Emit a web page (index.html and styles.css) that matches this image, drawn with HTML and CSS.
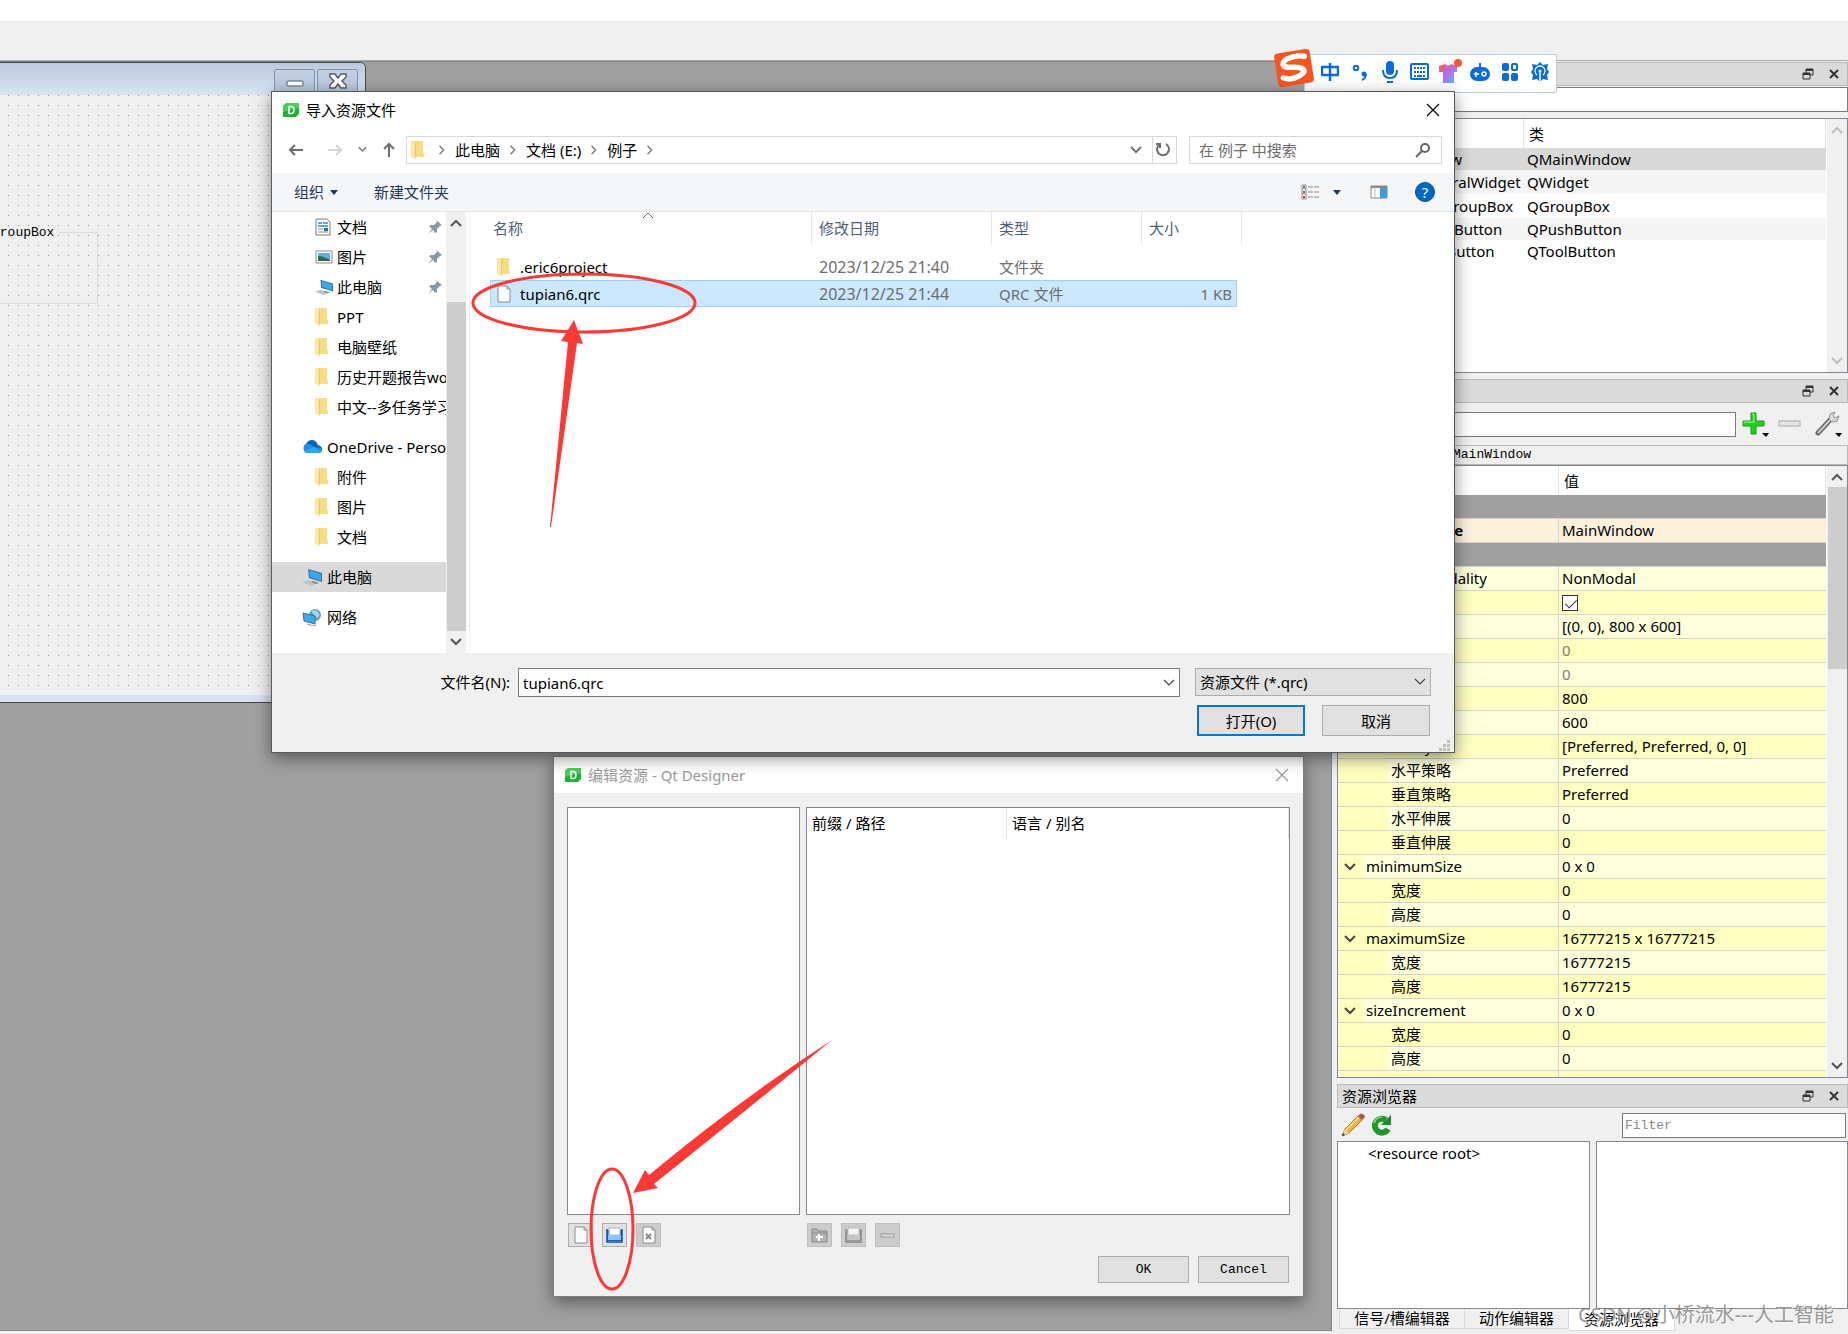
FILE: index.html
```html
<!DOCTYPE html>
<html lang="zh-CN">
<head>
<meta charset="utf-8">
<title>Qt Designer</title>
<link rel="stylesheet" href="styles.css">
</head>
<body>
<svg class="defs" aria-hidden="true">
  <symbol id="folder" viewBox="0 0 14 18" preserveAspectRatio="xMinYMid"><path fill="#f9dc86" d="M3 0h9v12l1 1v3H3z"/><path fill="#fbe7a6" d="M0 0h4v18l-3-2H0z"/><path fill="#e9c765" d="M4 1h1v15l-1 2z"/></symbol>
  <symbol id="pin" viewBox="0 0 14 14"><path fill="#8a98a5" d="M8 0l6 5-2 1-3 3v3l-2 1-2-3-5 4 4-5-3-3 2-1h3l3-3z"/></symbol>
  <symbol id="pc" viewBox="0 0 20 17"><path fill="#4b6a86" d="M6 0l14 4v9L7 9z"/><path fill="#35a7f5" d="M7 1l12 4v7L8 8z"/><path fill="#b8c2ca" d="M0 13l6-2 9 3-5 3z"/><path fill="#7f8b94" d="M11 12l6 2-3 1-5-2z"/></symbol>
  <symbol id="float" viewBox="0 0 12 12"><path fill="none" stroke="#333" d="M4 5V1h7v6H8M1 5h7v6H1z"/><path stroke="#333" stroke-width="2" d="M4 2h7M1 6h7"/></symbol>
  <symbol id="cross" viewBox="0 0 12 12"><path stroke="#333" stroke-width="2" d="M2 2l8 8M10 2l-8 8"/></symbol>
  <symbol id="thinx" viewBox="0 0 14 14"><path stroke="currentColor" stroke-width="1.2" d="M1 1l12 12M13 1L1 13"/></symbol>
  <symbol id="down" viewBox="0 0 12 8"><path fill="none" stroke="currentColor" stroke-width="2" d="M1 1l5 5 5-5"/></symbol>
  <symbol id="downthin" viewBox="0 0 12 8"><path fill="none" stroke="currentColor" stroke-width="1.2" d="M1 1l5 5 5-5"/></symbol>
  <symbol id="up" viewBox="0 0 12 8"><path fill="none" stroke="currentColor" stroke-width="2" d="M1 7l5-5 5 5"/></symbol>
  <symbol id="right" viewBox="0 0 8 12"><path fill="none" stroke="#777" stroke-width="1.6" d="M1 1l5 5-5 5"/></symbol>
  <symbol id="caret" viewBox="0 0 8 5"><path fill="currentColor" d="M0 0h8L4 5z"/></symbol>
  <symbol id="page" viewBox="0 0 14 18"><path fill="#fbfbfb" stroke="#8c8c8c" d="M1 1h9l3 3v13H1z"/><path fill="none" stroke="#8c8c8c" d="M10 1v3h3"/></symbol>
  <symbol id="qtd" viewBox="0 0 16 14"><path fill="#22b035" d="M3 0h13v11l-3 3H0V3z"/><path fill="#4ccf5a" d="M3 0h13v5L0 9V3z"/><path fill="none" stroke="#fff" stroke-width="1.5" d="M6 3.500h2q3 0 3 3.500t-3 3.500H6z"/></symbol>
</svg>

<div class="app">
  <header class="menu-strip"></header>
  <div class="tool-strip"></div>
  <div class="workspace">
    <main class="mdi">
      <section class="form-window">
        <div class="form-title">
          <button class="form-btn" aria-label="最小化"><svg width="18" height="16"><rect x="1" y="8" width="16" height="5" rx="1" fill="#fff" stroke="#555b66"/></svg></button>
          <button class="form-btn" aria-label="关闭"><svg width="18" height="16"><path d="M1 1h5l3 4 3-4h5v3l-4 4 4 4v3h-5l-3-4-3 4H1v-3l4-4-4-4z" fill="#fff" stroke="#555b66" stroke-width="1.400"/></svg></button>
        </div>
        <div class="form-canvas">
          <fieldset class="group"><legend>GroupBox</legend></fieldset>
        </div>
      </section>
    </main>

    <aside class="docks">
      <section class="dock">
        <div class="dock-title"><span></span><button class="icon-btn" aria-label="浮动"><svg width="12" height="12"><use href="#float"/></svg></button><button class="icon-btn" aria-label="关闭"><svg width="12" height="12"><use href="#cross"/></svg></button></div>
        <input class="line-edit object-filter" type="text" aria-label="过滤对象">
        <div class="view object-view">
          <table class="object-tree">
            <thead><tr><th></th><th>类</th></tr></thead>
            <tbody>
              <tr class="current"><td class="in-root">MainWindow</td><td>QMainWindow</td></tr>
              <tr class="alt tall"><td class="in-central">centralWidget</td><td>QWidget</td></tr>
              <tr class="tall"><td class="in-group">groupBox</td><td>QGroupBox</td></tr>
              <tr class="alt"><td class="in-leaf">pushButton</td><td>QPushButton</td></tr>
              <tr><td class="in-leaf">toolButton</td><td>QToolButton</td></tr>
            </tbody>
          </table>
          <div class="scroll idle"><svg width="12" height="8"><use href="#up"/></svg><svg width="12" height="8"><use href="#down"/></svg></div>
        </div>
      </section>

      <section class="dock props">
        <div class="dock-title"><span></span><button class="icon-btn" aria-label="浮动"><svg width="12" height="12"><use href="#float"/></svg></button><button class="icon-btn" aria-label="关闭"><svg width="12" height="12"><use href="#cross"/></svg></button></div>
        <div class="prop-tools">
          <input class="line-edit" type="text" aria-label="过滤属性">
          <button class="icon-btn" aria-label="添加"><svg width="28" height="28"><path d="M9 3h5v8h8v5h-8v8H9v-8H1v-5h8z" fill="#22d322" stroke="#119a11"/><path d="M10 4h2v8H2v1" fill="none" stroke="#a5f7a0"/><path d="M20 23h7l-3 4z"/></svg></button>
          <button class="icon-btn minus" aria-label="移除"><svg width="24" height="28"><rect x="1" y="11" width="21" height="5" fill="#e4e4e4" stroke="#a9a9a9"/></svg></button>
          <button class="icon-btn wrench" aria-label="配置"><svg width="28" height="28"><path d="M3 23L16 9" stroke="#666" stroke-width="5" stroke-linecap="round"/><path d="M3 23L17 8" stroke="#ccc" stroke-width="2"/><path d="M20 2l-5 2-1 5 3 3 5-1 2-5-4 2-2-2z" fill="#ddd" stroke="#8d8d8d"/><path d="M20 23h7l-3 4z"/></svg></button>
        </div>
        <div class="prop-object">MainWindow</div>
        <div class="view prop-view">
          <table class="prop-grid">
            <thead><tr><th></th><th>值</th></tr></thead>
            <tbody>
              <tr class="cat"><td colspan="2"></td></tr>
              <tr class="changed"><td class="l1">objectName</td><td>MainWindow</td></tr>
              <tr class="cat"><td colspan="2"></td></tr>
              <tr><td class="l1 wide">windowModality</td><td>NonModal</td></tr>
              <tr><td class="l1">enabled</td><td><input class="tick" type="checkbox" checked aria-label="enabled"></td></tr>
              <tr><td class="l1">geometry</td><td>[(0, 0), 800 x 600]</td></tr>
              <tr class="off"><td class="l2">X</td><td>0</td></tr>
              <tr class="off"><td class="l2">Y</td><td>0</td></tr>
              <tr><td class="l2">宽度</td><td>800</td></tr>
              <tr><td class="l2">高度</td><td>600</td></tr>
              <tr><td class="l1">sizePolicy</td><td>[Preferred, Preferred, 0, 0]</td></tr>
              <tr><td class="l2">水平策略</td><td>Preferred</td></tr>
              <tr><td class="l2">垂直策略</td><td>Preferred</td></tr>
              <tr><td class="l2">水平伸展</td><td>0</td></tr>
              <tr><td class="l2">垂直伸展</td><td>0</td></tr>
              <tr><td class="l1 open"><svg width="12" height="8"><use href="#down"/></svg>minimumSize</td><td>0 x 0</td></tr>
              <tr><td class="l2">宽度</td><td>0</td></tr>
              <tr><td class="l2">高度</td><td>0</td></tr>
              <tr><td class="l1 open"><svg width="12" height="8"><use href="#down"/></svg>maximumSize</td><td>16777215 x 16777215</td></tr>
              <tr><td class="l2">宽度</td><td>16777215</td></tr>
              <tr><td class="l2">高度</td><td>16777215</td></tr>
              <tr><td class="l1 open"><svg width="12" height="8"><use href="#down"/></svg>sizeIncrement</td><td>0 x 0</td></tr>
              <tr><td class="l2">宽度</td><td>0</td></tr>
              <tr><td class="l2">高度</td><td>0</td></tr>
              <tr><td class="l1">baseSize</td><td></td></tr>
            </tbody>
          </table>
          <div class="scroll"><svg width="12" height="8"><use href="#up"/></svg><div class="thumb prop-thumb"></div><svg width="12" height="8"><use href="#down"/></svg></div>
        </div>
      </section>

      <section class="dock">
        <div class="dock-title"><span>资源浏览器</span><button class="icon-btn" aria-label="浮动"><svg width="12" height="12"><use href="#float"/></svg></button><button class="icon-btn" aria-label="关闭"><svg width="12" height="12"><use href="#cross"/></svg></button></div>
        <div class="res-tools">
          <button class="icon-btn" aria-label="编辑资源"><svg width="24" height="24"><path d="M1 23l3-7L17 3l4 4L8 20z" fill="#f2b33d" stroke="#a87422"/><path d="M5 17L18 4" stroke="#ffe09a" stroke-width="1.500"/><path d="M17 3l2-2q2-1 4 1t0 3l-2 2z" fill="#b9543a"/><path d="M1 23l3-7 4 4z" fill="#ecd3a8"/><path d="M1 23l1-3 2 2z" fill="#333"/></svg></button>
          <button class="icon-btn" aria-label="重新加载"><svg width="24" height="24"><path d="M18 16a7 7 0 1 1-2-9" fill="none" stroke="#1e9a2b" stroke-width="6"/><path d="M21 2v10H11z" fill="#1b8f28"/><path d="M4 10q2-6 8-6" fill="none" stroke="#8fdc93" stroke-width="1.500"/></svg></button>
          <input class="line-edit mono" type="text" placeholder="Filter" aria-label="Filter">
        </div>
        <div class="res-lists">
          <ul class="view res-root"><li>&lt;resource root&gt;</li></ul>
          <div class="view"></div>
        </div>
      </section>
      <nav class="tabs">
        <button class="tab">信号/槽编辑器</button><button class="tab">动作编辑器</button><button class="tab active">资源浏览器</button>
      </nav>
    </aside>
  </div>
</div>

<section class="ime" aria-label="输入法">
  <svg class="ime-logo" width="42" height="42" viewBox="0 0 42 42"><g transform="rotate(-9 21 21)"><rect x="3" y="4" width="36" height="34" rx="4" fill="#f8541f"/><path d="M33 11q-5-2-13-1t-9 5 8 5 11 4-6 6-15-1" fill="none" stroke="#fff" stroke-width="5.500" stroke-linecap="round"/></g></svg>
  <svg width="18" height="20"><path d="M1 5h16v8H1zM9 1v18" fill="none" stroke="#0b6bd8" stroke-width="2.500"/></svg>
  <svg width="18" height="20"><circle cx="5" cy="6" r="2.200" fill="none" stroke="#0b6bd8" stroke-width="2"/><circle cx="13" cy="12" r="2.500" fill="#0b6bd8"/><path d="M15 12q0 4-4 6" fill="none" stroke="#0b6bd8" stroke-width="2"/></svg>
  <svg width="18" height="22"><rect x="5" y="0" width="8" height="14" rx="4" fill="#0b6bd8"/><path d="M2 9q0 8 7 8t7-8M6 21h6" fill="none" stroke="#0b6bd8" stroke-width="2"/></svg>
  <svg width="20" height="18"><rect x="1" y="1" width="17" height="15" rx="1" fill="none" stroke="#0b6bd8" stroke-width="2"/><path d="M5 4v2M8 4v2M11 4v2M14 4v2M5 8v2M8 8v2M11 8v2M14 8v2M5 12v2M14 12v2" stroke="#0b6bd8" stroke-width="2"/><path d="M7 13h5" stroke="#0b6bd8" stroke-width="2"/></svg>
  <svg width="24" height="26"><defs><linearGradient id="shirt" x2="1" y2="1"><stop offset="0" stop-color="#ff5a3c"/><stop offset=".5" stop-color="#b56bf0"/><stop offset="1" stop-color="#49c8ff"/></linearGradient></defs><path d="M1 7l6-2q3 3 6 0l6 2v6h-3v11H5V13H1z" fill="url(#shirt)"/><circle cx="20" cy="4" r="4" fill="#ff5530"/></svg>
  <svg width="20" height="20"><rect x="0" y="5" width="20" height="14" rx="7" fill="#0b6bd8"/><path d="M10 1v5" stroke="#0b6bd8" stroke-width="2"/><path d="M4 12h5M6 10v5" stroke="#fff" stroke-width="1.500"/><circle cx="14" cy="12" r="2" fill="none" stroke="#fff" stroke-width="1.400"/></svg>
  <svg width="18" height="18"><rect x="1" y="0" width="7" height="8" rx="2" fill="#0b6bd8"/><rect x="11" y="1" width="5" height="6" rx="1" fill="none" stroke="#0b6bd8" stroke-width="2"/><rect x="1" y="10" width="7" height="8" rx="2" fill="#0b6bd8"/><rect x="10" y="10" width="7" height="8" rx="2" fill="#0b6bd8"/></svg>
  <svg width="18" height="20"><path d="M9 0l3 3 5-1-1 5 2 3-2 3 1 5-5-1-3 3-3-3-5 1 1-5-2-3 2-3-1-5 5 1z" fill="#0b6bd8"/><path d="M6 13a5 5 0 1 1 6 0" fill="none" stroke="#fff" stroke-width="1.300"/><circle cx="9" cy="9" r="1.500" fill="#fff"/><path d="M9 9v11" stroke="#fff" stroke-width="1.500"/></svg>
</section>

<section class="dialog edit-dialog" aria-label="编辑资源">
  <div class="dlg-title inactive"><svg width="16" height="14"><use href="#qtd"/></svg><h2>编辑资源 - Qt Designer</h2><button class="icon-btn" aria-label="关闭"><svg width="14" height="14"><use href="#thinx"/></svg></button></div>
  <div class="edit-body">
    <div class="edit-panes">
      <div class="view"></div>
      <div class="view"><div class="edit-head"><span>前缀 / 路径</span><span>语言 / 别名</span></div></div>
      <div class="tool-row">
        <button class="tool" aria-label="新建资源文件"><svg width="14" height="18"><use href="#page"/></svg></button>
        <button class="tool" aria-label="打开资源文件"><svg width="17" height="17"><path d="M1 3h15v11H1z" fill="#1e62c4"/><path d="M3 1h11v7H3z" fill="#fff" stroke="#9db7d8"/><path d="M2 8h13v5H2z" fill="#8cc4fa"/><path d="M1 2v13h15V2" fill="none" stroke="#1550a8" stroke-width="1.500"/></svg></button>
        <button class="tool" disabled aria-label="移除"><svg width="14" height="18"><use href="#page"/><path d="M4 8l5 5M9 8l-5 5" stroke="#888" stroke-width="2"/></svg></button>
      </div>
      <div class="tool-row">
        <button class="tool" disabled aria-label="添加前缀"><svg width="17" height="17"><path d="M1 5V2h5l1 2h9v11H1z" fill="#b4b4b4" stroke="#888"/><path d="M1 6h15" stroke="#888"/><path d="M8 7v7M5 10h7" stroke="#fff" stroke-width="2"/></svg></button>
        <button class="tool" disabled aria-label="添加文件"><svg width="17" height="17"><path d="M1 3h15v11H1z" fill="#999"/><path d="M3 1h11v7H3z" fill="#f6f6f6" stroke="#bbb"/><path d="M2 8h13v5H2z" fill="#c6c6c6"/><path d="M1 2v13h15V2" fill="none" stroke="#888" stroke-width="1.500"/></svg></button>
        <button class="tool" disabled aria-label="移除"><svg width="17" height="17"><rect x="2" y="7" width="13" height="3" fill="#ddd" stroke="#999"/></svg></button>
      </div>
    </div>
    <div class="edit-actions"><button class="push mono">OK</button><button class="push mono">Cancel</button></div>
  </div>
</section>

<section class="dialog file-dialog" aria-label="导入资源文件">
  <div class="dlg-title"><svg width="16" height="14"><use href="#qtd"/></svg><h2>导入资源文件</h2><button class="icon-btn" aria-label="关闭"><svg width="14" height="14"><use href="#thinx"/></svg></button></div>
  <div class="nav-row">
    <div class="nav-btns">
      <button class="icon-btn" aria-label="后退"><svg width="16" height="14"><path d="M15 7H2M7 2L2 7l5 5" fill="none" stroke="#6e6e6e" stroke-width="2"/></svg></button>
      <button class="icon-btn" aria-label="前进"><svg width="16" height="14"><path d="M1 7h13M9 2l5 5-5 5" fill="none" stroke="#d4d4d4" stroke-width="2"/></svg></button>
      <button class="icon-btn grey" aria-label="最近位置"><svg width="9" height="7"><use href="#down"/></svg></button>
      <button class="icon-btn" aria-label="上移"><svg width="14" height="16"><path d="M7 15V2M2 7l5-5 5 5" fill="none" stroke="#6e6e6e" stroke-width="2"/></svg></button>
    </div>
    <div class="address">
      <svg width="14" height="18"><use href="#folder"/></svg><svg width="8" height="10"><use href="#right"/></svg><a href="#">此电脑</a><svg width="8" height="10"><use href="#right"/></svg><a href="#">文档 (E:)</a><svg width="8" height="10"><use href="#right"/></svg><a href="#">例子</a><svg width="8" height="10"><use href="#right"/></svg>
      <button class="icon-btn grey addr-drop" aria-label="以前的位置"><svg width="12" height="8"><use href="#down"/></svg></button>
      <button class="icon-btn refresh" aria-label="刷新"><svg width="16" height="16"><path d="M11 2a6 6 0 1 1-6 0M5 6V2H1" fill="none" stroke="#6e6e6e" stroke-width="2"/></svg></button>
    </div>
    <div class="search"><input type="search" placeholder="在 例子 中搜索" aria-label="搜索"><svg width="16" height="16"><circle cx="10" cy="6" r="4" fill="none" stroke="#666" stroke-width="2"/><path d="M7 9l-6 6" stroke="#666" stroke-width="2"/></svg></div>
  </div>
  <div class="cmd-row">
    <button class="cmd">组织<svg width="8" height="5"><use href="#caret"/></svg></button><button class="cmd">新建文件夹</button>
    <button class="icon-btn view-mode" aria-label="更改视图"><svg width="19" height="16"><path d="M1 1h4v14H1zM1 5h4M1 10h4" fill="#fff" stroke="#8a8a8a"/><path d="M7 3h5M13 3h5M7 8h5M13 8h5M7 13h5M13 13h5" stroke="#888"/><path d="M2 3h2" stroke="#3f7fbf" stroke-width="2"/><path d="M2 8h2" stroke="#8a6a20" stroke-width="2"/><path d="M2 13h2" stroke="#c33" stroke-width="2"/></svg></button>
    <button class="icon-btn navy" aria-label="更多选项"><svg width="8" height="5"><use href="#caret"/></svg></button>
    <button class="icon-btn preview" aria-label="预览窗格"><svg width="18" height="14"><path d="M1 1h16v12H1z" fill="#fff" stroke="#888"/><path d="M1 2h16" stroke="#888" stroke-width="2"/><path d="M5 2v11" stroke="#bbb"/><path d="M10 3h7v10h-7z" fill="#3f9be0"/></svg></button>
    <button class="help" aria-label="帮助">?</button>
  </div>
  <div class="browse">
    <ul class="places">
      <li class="sub"><svg width="16" height="18"><path d="M1 1h11l3 3v13H1z" fill="#fff" stroke="#7a7a7a"/><path d="M3 5h4M8 5h5M3 8h10" stroke="#2b8fd6" stroke-width="1.500"/><path d="M3 11h5M3 14h10" stroke="#888"/><path d="M9 10h4v3H9z" fill="#356a9a"/></svg><a href="#">文档</a><svg class="pin" width="14" height="14"><use href="#pin"/></svg></li>
      <li class="sub"><svg width="18" height="14"><path d="M1 1h16v12H1z" fill="#fff" stroke="#8a8a8a"/><path d="M3 3h12v8H3z" fill="#63aef0"/><path d="M3 6q5 0 12 4v1H3z" fill="#2f6a4d"/></svg><a href="#">图片</a><svg class="pin" width="14" height="14"><use href="#pin"/></svg></li>
      <li class="sub"><svg width="18" height="17"><use href="#pc"/></svg><a href="#">此电脑</a><svg class="pin" width="14" height="14"><use href="#pin"/></svg></li>
      <li class="sub"><svg width="14" height="18"><use href="#folder"/></svg><a href="#">PPT</a></li>
      <li class="sub"><svg width="14" height="18"><use href="#folder"/></svg><a href="#">电脑壁纸</a></li>
      <li class="sub"><svg width="14" height="18"><use href="#folder"/></svg><a href="#">历史开题报告word</a></li>
      <li class="sub"><svg width="14" height="18"><use href="#folder"/></svg><a href="#">中文--多任务学习</a></li>
      <li class="top"><svg width="20" height="14"><path d="M5 13a5 5 0 0 1-1-9q2-4 6-4t6 5q4 1 4 4t-3 4z" fill="#0a64b8"/><path d="M4 13a4 5 0 0 1 0-9q4-1 8 3l7 1q2 5-3 5z" fill="#1f8fe6"/><path d="M2 12q4-3 10-5l7 4q-1 2-3 2H4z" fill="#2ba6f0"/></svg><a href="#">OneDrive - Personal</a></li>
      <li class="sub"><svg width="14" height="18"><use href="#folder"/></svg><a href="#">附件</a></li>
      <li class="sub"><svg width="14" height="18"><use href="#folder"/></svg><a href="#">图片</a></li>
      <li class="sub"><svg width="14" height="18"><use href="#folder"/></svg><a href="#">文档</a></li>
      <li class="top current"><svg width="20" height="17"><use href="#pc"/></svg><a href="#">此电脑</a></li>
      <li class="top"><svg width="20" height="18"><circle cx="13" cy="7" r="6" fill="#5f9fc4"/><path d="M9 3q4-2 7 1t-1 6" fill="#a9d3e6"/><path d="M1 5l12 3v8L2 13z" fill="#35a7f5" stroke="#4b6a86"/><path d="M5 16l7 2 2-1" stroke="#999" fill="none"/></svg><a href="#">网络</a></li>
    </ul>
    <div class="scroll places-scroll"><svg width="12" height="8"><use href="#up"/></svg><div class="thumb places-thumb"></div><svg width="12" height="8"><use href="#down"/></svg></div>
    <div class="files">
      <svg class="sort" width="12" height="8"><path d="M1 6l5-5 5 5" fill="none" stroke="#666"/></svg>
      <table>
        <colgroup><col class="c-name"><col class="c-date"><col class="c-type"><col><col class="c-end"></colgroup>
        <thead><tr><th class="first">名称</th><th>修改日期</th><th>类型</th><th colspan="2">大小</th></tr></thead>
        <tbody>
          <tr><td><span class="fname"><svg width="14" height="18"><use href="#folder"/></svg>.eric6project</span></td><td class="date">2023/12/25 21:40</td><td>文件夹</td><td></td></tr>
          <tr class="sel"><td><span class="fname"><svg width="14" height="18"><use href="#page"/></svg>tupian6.qrc</span></td><td class="date">2023/12/25 21:44</td><td>QRC 文件</td><td class="num">1 KB</td></tr>
        </tbody>
      </table>
    </div>
  </div>
  <div class="dlg-foot">
    <label for="fn">文件名(N):</label>
    <div class="combo file-name"><input id="fn" type="text" value="tupian6.qrc"><button class="icon-btn" aria-label="展开"><svg width="12" height="8"><use href="#downthin"/></svg></button></div>
    <div class="combo file-type"><select aria-label="文件类型"><option>资源文件 (*.qrc)</option></select><svg width="12" height="8"><use href="#downthin"/></svg></div>
    <div class="foot-actions"><button class="push default">打开(O)</button><button class="push">取消</button></div>
    <svg class="grip" width="12" height="12"><path fill="#bfbfbf" d="M8 0h3v3H8zM8 4h3v3H8zM4 4h3v3H4zM8 8h3v3H8zM4 8h3v3H4zM0 8h3v3H0z"/></svg>
  </div>
</section>

<svg class="marks" width="900" height="1334" aria-hidden="true">
  <g fill="none" stroke="#fb3a36" stroke-width="3"><ellipse cx="584" cy="303" rx="111" ry="29"/><ellipse cx="612" cy="1229" rx="21" ry="60"/></g>
  <g fill="#fb3a36"><path d="M574 320l9 24-6-1-26 184h-1l18-185-7-1z"/><path d="M633 1193l12-23 4 5q90-75 183-135-85 70-178 144l4 4z"/></g>
</svg>
<div class="watermark">CSDN @小桥流水---人工智能</div>
</body>
</html>
```
FILE: styles.css
```css
* { box-sizing: border-box; }
body {
  margin: 0;
  font: 15px/20px "Noto Sans", "Noto Sans CJK SC", sans-serif;
  color: #000;
  background: #f0f0f0;
  overflow: hidden;
}
button, input, select { font: inherit; color: inherit; margin: 0; padding: 0; border-radius: 0; }
input, select { outline: 0; min-width: 0; }
ul { margin: 0; padding: 0; list-style: none; }
a { color: inherit; text-decoration: none; white-space: nowrap; }
h2 { margin: 0; font: inherit; flex: 1; }
table { border-collapse: separate; border-spacing: 0; table-layout: fixed; }
th { font-weight: 400; text-align: left; }
th, td { padding: 0; white-space: nowrap; }
svg { display: block; flex: none; }
.defs { position: absolute; width: 0; height: 0; }
.icon-btn { display: flex; align-items: center; justify-content: center; border: 0; background: none; flex: none; }
.grey { color: #777; }
.navy { color: #1b3a66; }
.mono { font-family: "Liberation Mono", "Noto Sans CJK SC", monospace; font-size: 13px; }

/* Application frame */
.app { display: flex; flex-direction: column; height: 100vh; min-height: 1200px; }
.menu-strip { height: 22px; background: #fff; border-bottom: 1px solid #e8e8e8; }
.tool-strip { height: 39px; border-bottom: 1px solid #a8a8a8; }
.workspace { flex: 1; display: flex; min-height: 0; padding-bottom: 3px; }
.mdi { flex: 1; background: #a0a0a0; border: 1px solid #828790; border-left: 0; overflow: hidden; }

.form-window { width: 366px; height: 641px; background: #d6e3f2; border: 1px solid #444; border-left: 0; border-radius: 0 6px 0 0; padding-bottom: 7px; display: flex; flex-direction: column; }
.form-title { display: flex; justify-content: flex-end; gap: 2px; height: 32px; padding: 6px 7px 0 0; background: linear-gradient(#bccbdc, #d6e3f2); border-radius: 0 5px 0 0; }
.form-btn { display: flex; justify-content: center; align-items: center; width: 41px; height: 24px; border: 1px solid #7f93b0; border-radius: 2px; background: linear-gradient(#c3d1e1, #b4c5d9); }
.form-canvas {
  flex: 1; position: relative; overflow: hidden; margin-right: 8px;
  background: linear-gradient(90deg, #f0f0f0 9px, transparent 9px), linear-gradient(#f0f0f0 9px, #888 9px);
  background-size: 10px 10px; background-position: -1px -9px;
}
.group { position: absolute; left: -20px; top: 128px; width: 118px; height: 81px; margin: 0; padding: 0 0 0 11px; border: 1px solid #dcdcdc; }
.group legend { padding: 2px 5px 0 0; font: 13px/16px "Liberation Mono", monospace; }

/* Docks */
.docks { width: 516px; display: flex; flex-direction: column; padding: 1px 0 0 5px; }
.dock { display: flex; flex-direction: column; }
.dock-title { display: flex; align-items: center; gap: 14px; height: 24px; margin-bottom: 6px; padding: 0 7px 0 4px; background: #dadada; border: 1px solid #b9b9b9; }
.dock-title span { flex: 1; }
.line-edit { height: 25px; border: 1px solid #7a7a7a; background: #fff; padding: 0 2px; }
.line-edit::placeholder { color: #8a8a8a; }
.object-filter { margin: -5px 0 6px; }
.view { background: #fff; border: 1px solid #828790; overflow: hidden; }
.object-view { display: flex; height: 255px; margin-bottom: 6px; }
.object-view table, .prop-view table { flex: 1; align-self: flex-start; margin-right: 1px; }

.object-tree th { height: 29px; border-right: 1px solid #e3e3e3; }
.object-tree th:last-child { padding-left: 5px; }
.object-tree th:first-child { width: 186px; }
.object-tree td { height: 22px; line-height: 22px; }
.object-tree td:last-child { padding-left: 3px; }
.object-tree .tall td { height: 24px; }
.object-tree .current td { background: #d9d9d9; }
.object-tree .alt td { background: #f5f5f5; }
.object-tree .in-root { padding-left: 32px; }
.object-tree .in-central { padding-left: 84px; }
.object-tree .in-group { padding-left: 106px; }
.object-tree .in-leaf { padding-left: 81px; }

.scroll { width: 20px; display: flex; flex-direction: column; justify-content: space-between; align-items: center; padding: 7px 0; background: #f0f0f0; color: #555; }
.idle { color: #bdbdbd; }
.thumb { width: 19px; background: #cdcdcd; margin: 6px 0 auto; }
.prop-thumb { height: 182px; }

.props { flex: 1; min-height: 0; }
.prop-tools { display: flex; gap: 8px; align-items: center; height: 28px; margin: 1px 0 7px; }
.prop-tools .line-edit { flex: 1; margin-right: -2px; }
.prop-tools .minus { margin-right: 5px; }
.prop-tools .wrench { margin-right: 5px; }
.prop-object { height: 20px; border: 1px solid #b9b9b9; padding-left: 115px; font: 13px/18px "Liberation Mono", monospace; }
.prop-view { flex: 1; display: flex; min-height: 0; margin: 0 0 6px; }
.prop-grid th { height: 29px; border-right: 1px solid #e3e3e3; }
.prop-grid th:first-child { width: 221px; }
.prop-grid th:last-child { padding-left: 5px; }
.prop-grid td { height: 24px; line-height: 23px; border-bottom: 1px solid #d2d2d2; background: #ffffdc; padding-left: 3px; }
.prop-grid tr:nth-child(odd) td { background: #ffffbf; }
.prop-grid tr:nth-child(even) td { background: #ffffdc; }
.prop-grid td:first-child { border-right: 1px solid #d2d2d2; }
.prop-grid tr .l1 { padding-left: 27px; }
.prop-grid tr .l2 { padding-left: 53px; }
.prop-grid tr:nth-child(even) .l1 { background: linear-gradient(90deg, #ffffbf 25px, #ffffdc 25px); }
.prop-grid tr:nth-child(even) .l2 { background: linear-gradient(90deg, #ffffbf 50px, #ffffdc 50px); }
.prop-grid tr.cat:nth-child(odd) td { background: #a0a0a0; border-right: 0; }
.prop-grid tr.changed:nth-child(even) td { background: #fff0dc; }
.prop-grid .changed .l1 { font-weight: 700; padding-left: 34px; }
.prop-grid tr .wide { padding-left: 33px; }
.off td { color: #808080; }
.off td:first-child { color: #000; }
.open svg { float: left; margin: 8px 10px 0 -21px; color: #444; }
.tick { display: block; appearance: none; width: 16px; height: 16px; border: 1px solid #333; background: #fff; position: relative; }
.tick:checked::after { content: ""; position: absolute; left: 5px; top: 1px; width: 5px; height: 10px; border: solid #333; border-width: 0 1px 1px 0; transform: rotate(45deg); }

.res-tools { display: flex; gap: 5px; height: 24px; margin: -1px 2px 4px 4px; }
.res-tools .line-edit { width: 224px; margin-left: auto; }
.res-lists { display: grid; grid-template-columns: 1fr 1fr; gap: 6px; height: 168px; }
.res-root { padding: 1px 0 0 30px; }
.tabs { display: flex; height: 22px; padding-left: 2px; }
.tab { width: 104px; height: 20px; border: 1px solid #d9d9d9; border-top: 0; border-left: 0; background: #f0f0f0; line-height: 19px; white-space: nowrap; }
.tab:first-child { width: 126px; border-left: 1px solid #d9d9d9; }
.tab.active { width: 106px; height: 22px; background: #fff; }

/* Input method bar */
.ime { position: absolute; left: 1274px; top: 54px; z-index: 1; width: 283px; height: 39px; display: grid; grid-template-columns: repeat(8, 30px); align-items: center; justify-items: center; padding: 0 0 4px 41px; }
.ime::before { content: ""; position: absolute; z-index: -1; inset: 0 0 0 30px; background: #fff; border: 1px solid #b9cfe6; border-radius: 2px; }
.ime-logo { position: absolute; left: -1px; top: -7px; }

/* Dialog windows */
.dialog { position: absolute; display: flex; flex-direction: column; border: 1px solid #5a5a5a; background: #f0f0f0; box-shadow: 0 5px 16px rgba(0, 0, 0, .45); }
.dlg-title { display: flex; align-items: center; gap: 7px; height: 36px; padding: 0 14px 0 11px; background: #fff; }
.inactive { color: #999; }

.edit-dialog { left: 553px; top: 756px; width: 751px; z-index: 2; border-color: #808080; }
.edit-body { padding: 14px 13px 13px; }
.edit-panes { display: grid; grid-template-columns: 233px 1fr; grid-template-rows: 408px 25px; gap: 8px 6px; }
.edit-head { display: grid; grid-template-columns: 200px 1fr; height: 30px; line-height: 30px; }
.edit-head span { padding-left: 5px; border-right: 1px solid #e3e3e3; }
.tool-row { display: flex; gap: 9px; padding-left: 1px; }
.tool { display: flex; align-items: center; justify-content: center; width: 25px; height: 24px; border: 1px solid #adadad; background: #e1e1e1; }
.tool:disabled { background: #ccc; border-color: #bfbfbf; }
.edit-actions { display: flex; justify-content: flex-end; gap: 9px; padding: 8px 1px 0 0; }
.push { border: 1px solid #adadad; background: #e1e1e1; width: 108px; height: 31px; }
.push.mono { width: 91px; height: 27px; padding-top: 1px; }
.default { border: 2px solid #0078d7; }

.file-dialog { left: 271px; top: 91px; width: 1184px; z-index: 3; background: #fff; }
.nav-row { display: flex; align-items: center; height: 45px; padding: 0 12px 2px 16px; }
.nav-btns { display: flex; align-items: center; gap: 15px; width: 118px; }
.nav-btns .icon-btn:first-child { margin-right: 8px; }
.address { flex: 1; display: flex; align-items: center; gap: 9px; height: 28px; padding-left: 4px; border: 1px solid #d9d9d9; }
.address svg:first-child { margin-right: 4px; }
.address .addr-drop { margin-left: auto; }
.address .refresh { width: 24px; height: 26px; border-left: 1px solid #d9d9d9; margin-left: -3px; }
.search { display: flex; align-items: center; width: 253px; height: 28px; margin-left: 12px; padding: 0 10px 0 9px; border: 1px solid #d9d9d9; }
.search input { flex: 1; border: 0; background: none; }
.search input::placeholder { color: #6d6d6d; }
.cmd-row { display: flex; align-items: center; height: 39px; padding: 0 19px 0 22px; background: #f5f6f7; border-bottom: 1px solid #e4e8ec; color: #1e395b; }
.cmd { display: flex; align-items: center; gap: 6px; border: 0; background: none; margin-right: 36px; }
.view-mode { margin: 0 13px 0 auto; }
.preview { margin: 0 27px 0 29px; }
.help { width: 20px; height: 20px; border: 1px solid #0a4f94; border-radius: 50%; background: #0068c8; color: #fff; line-height: 18px; }

.browse { display: flex; height: 441px; }
.places { width: 174px; overflow: hidden; }
.places li { display: flex; align-items: center; height: 30px; }
.places svg { margin-right: 4px; }
.sub { padding-left: 43px; }
.sub svg:first-child { width: 18px; }
.top { padding-left: 30px; margin-top: 10px; }
.places .top svg { margin-right: 5px; }
.places .current { background: #d9d9d9; }
.places a { overflow: hidden; }
.places .pin { margin: 0 4px 0 auto; }
.places-scroll { margin: 0 3px 0 0; }
.places-thumb { height: 329px; margin-top: 75px; }
.files { flex: 1; position: relative; border-left: 1px solid #f2f2f2; padding-left: 20px; }
.files table { width: 752px; }
.files th { height: 32px; padding-left: 7px; color: #4c607a; border-right: 1px solid #e5e5e5; }
.files .first { padding-left: 3px; }
.c-name { width: 322px; }
.c-date { width: 180px; }
.c-type { width: 150px; }
.c-end { width: 5px; }
.files td { height: 27px; padding-left: 7px; color: #6d6d6d; }
.files tbody::before { content: ""; display: table-row; height: 9px; }
.files td:first-child { color: #000; }
.files .date { font-size: 16px; }
.files .num { text-align: right; padding-right: 4px; }
.files .sel td { background: #cce8ff; border: solid #99d1ff; border-width: 1px 0; }
.files .sel td:last-child { border-right-width: 1px; }
.files .sel td:first-child { border-left-width: 1px; padding-left: 6px; }
.fname { display: flex; align-items: center; gap: 9px; }
.sort { position: absolute; left: 172px; top: 0; }

.dlg-foot { display: grid; grid-template-columns: 239px 662px 251px; row-gap: 8px; padding: 15px 23px 16px 0; background: #f0f0f0; position: relative; justify-content: end; }
.dlg-foot label { text-align: right; padding-right: 8px; line-height: 28px; }
.combo { display: flex; align-items: center; position: relative; height: 29px; border: 1px solid #7a7a7a; background: #fff; }
.combo input { flex: 1; border: 0; padding-left: 4px; background: none; }
.combo .icon-btn { width: 20px; height: 27px; color: #444; }
.file-type { margin-left: 15px; height: 28px; background: #e1e1e1; border-color: #adadad; }
.file-type select { flex: 1; height: 26px; appearance: none; border: 0; background: none; padding-left: 4px; }
.file-type svg { position: absolute; right: 4px; pointer-events: none; color: #444; }
.foot-actions { grid-column: 1 / -1; display: flex; justify-content: flex-end; gap: 17px; padding-right: 1px; }
.grip { position: absolute; right: 3px; bottom: 0; }

/* Annotations */
.marks { position: absolute; left: 0; top: 0; z-index: 4; pointer-events: none; }
.watermark { position: absolute; right: 14px; top: 1301px; z-index: 5; font-size: 20px; line-height: 28px; color: rgba(120, 120, 120, .75); text-shadow: 1px 1px 0 rgba(255, 255, 255, .6); white-space: nowrap; }
```
